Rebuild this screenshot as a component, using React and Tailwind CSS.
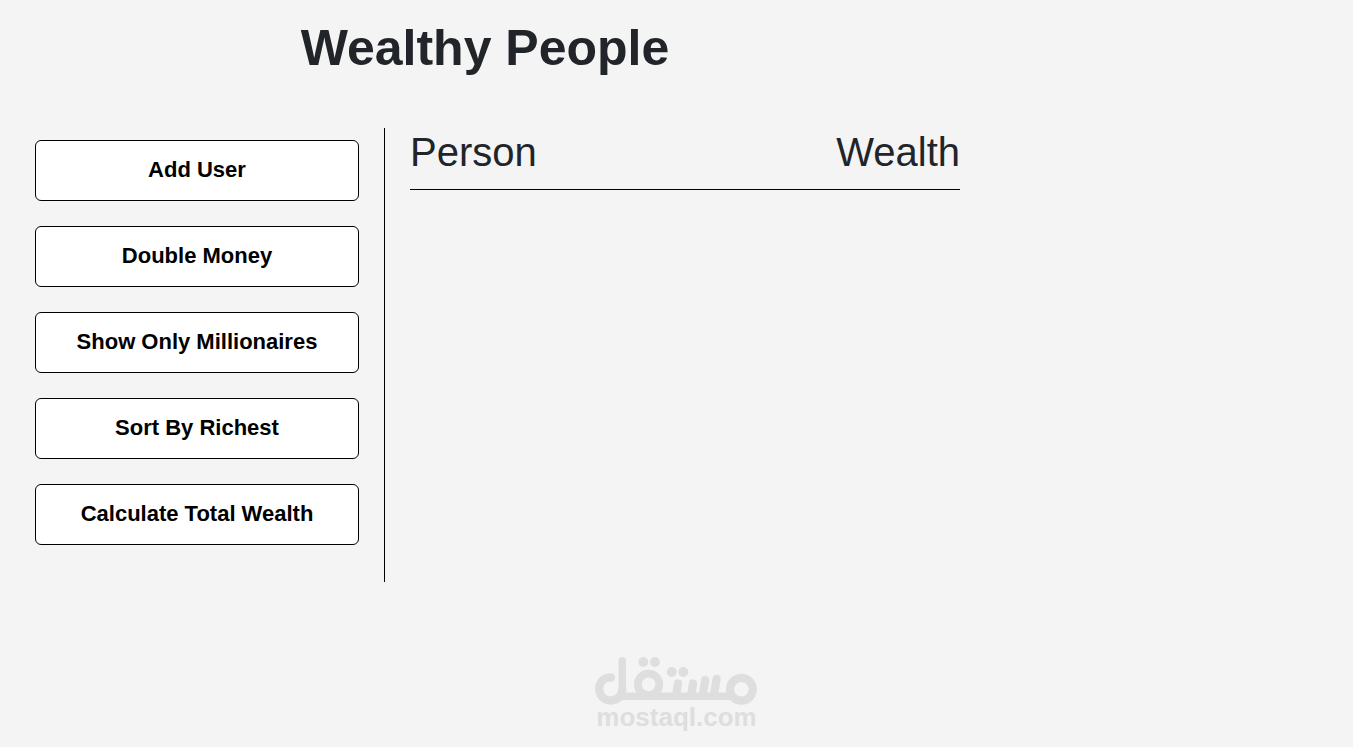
const actions = [
  'Add User',
  'Double Money',
  'Show Only Millionaires',
  'Sort By Richest',
  'Calculate Total Wealth',
];

function MostaqlLogo() {
  return (
    <svg className="block w-full" viewBox="1 0 164 50" fill="none" aria-hidden="true">
      <g stroke="#dedede" strokeWidth="8.2" strokeLinecap="round" strokeLinejoin="round">
        <path d="M17 22.6C9.5 21.7 5.2 27.5 5.2 34A11.5 11.5 0 0 0 16.7 45.6C23.5 45.6 28.3 40.5 28.3 34" />
        <path strokeWidth="7.4" d="M28.3 5.8V34C28.3 38 26.5 41 24 43C26 41.6 28 41.2 31 41.2H138" />
        <circle cx="54.6" cy="29.4" r="10.7" strokeWidth="7.8" />
        <path d="M84 28.5L82.2 40M99 28.5L97.2 40M111.2 25.2L108.8 40M122.6 23.8L120 40" />
        <circle cx="147.4" cy="34.3" r="11.4" />
      </g>
      <g fill="#dedede">
        <circle cx="49.3" cy="7" r="4.9" />
        <circle cx="61" cy="7" r="4.9" />
        <circle cx="77.8" cy="17" r="4.9" />
        <circle cx="89.3" cy="17" r="4.9" />
      </g>
    </svg>
  );
}

export default function App() {
  return (
    <div className="flex min-h-screen flex-col bg-[#f4f4f4] font-['Liberation_Sans',Arial,sans-serif] text-[#212529]">
      <div className="w-full max-w-[960px] pl-[10px]">
        <header className="pt-[18px] pb-[50px]">
          <h1 className="text-center text-[50px] leading-[60px] font-bold">Wealthy People</h1>
        </header>
        <main className="flex items-start">
          <aside className="flex w-[375px] shrink-0 flex-col gap-[25px] border-r border-black pt-3 pr-[25px] pb-[37px] pl-[25px]">
            {actions.map((label) => (
              <button
                key={label}
                type="button"
                className="h-[61px] w-full rounded-md border border-black bg-white pb-[2px] text-[22px] leading-8 font-bold text-black"
              >
                {label}
              </button>
            ))}
          </aside>
          <section className="min-w-0 flex-1 pl-[25px]">
            <table className="w-full border-collapse text-[40px] leading-[48px]">
              <thead>
                <tr className="border-b border-black">
                  <th scope="col" className="pb-[13px] text-left font-normal">Person</th>
                  <th scope="col" className="pb-[13px] text-right font-normal">Wealth</th>
                </tr>
              </thead>
            </table>
          </section>
        </main>
      </div>
      <footer className="mx-auto mt-auto w-[164px] pb-[18px]">
        <MostaqlLogo />
        <p className="text-center text-[26px] leading-6 font-bold text-[#dedede]">mostaql.com</p>
      </footer>
    </div>
  );
}
